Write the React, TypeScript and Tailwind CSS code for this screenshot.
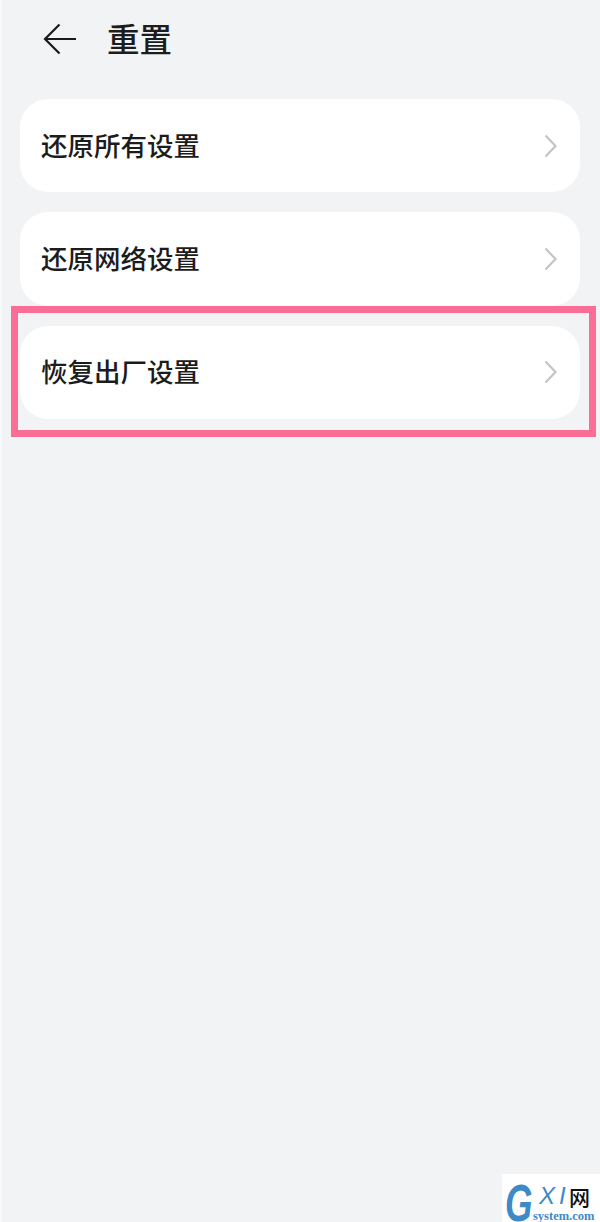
const rows = ["还原所有设置", "还原网络设置", "恢复出厂设置"];

const cjk = "font-['Noto_Sans_CJK_SC','Liberation_Sans',sans-serif]";

function Watermark() {
  return (
    <div className="absolute bottom-0 right-0 flex h-[48px] w-[98px] overflow-hidden bg-white pl-[3px] pt-[10px] font-['Liberation_Sans',sans-serif] text-[#3d8ac7]">
      <span className="w-[28px] shrink-0 origin-left scale-x-[0.68] text-[52px] font-bold italic leading-[38px]">G</span>
      <div className="flex flex-col">
        <div className="flex h-[24px] items-center">
          <span className="w-[36px] pl-[6px] text-[24px] italic leading-none tracking-[4px]">XI</span>
          <span className={`${cjk} text-[21px] font-medium leading-none text-[#111]`}>网</span>
        </div>
        <span className="mt-[2px] font-['Liberation_Serif',serif] text-[12.5px] font-bold leading-[13px]">system.com</span>
      </div>
    </div>
  );
}

export default function App() {
  return (
    <div className={`relative h-[1222px] w-[600px] overflow-hidden bg-[#f1f3f5] ${cjk}`}>
      <div className="absolute left-0 top-0 h-full w-[2px] bg-[#f8f9fa]" />

      <header className="flex h-[99px] items-start pl-[43px] pt-[22px]">
        <svg width="34" height="32" viewBox="0 0 34 32" fill="none" className="mt-[1px]">
          <path d="M33 16H2M16.5 1.5 2 16l14.5 14.5" stroke="#1a1a1a" strokeWidth="2.2" />
        </svg>
        <h1 className="ml-[30px] mt-[-3px] text-[32.5px] font-medium leading-[38px] text-[#1c1c1c]">重置</h1>
      </header>

      <div className="flex flex-col gap-5 px-5">
        {rows.map((label) => (
          <div key={label} className="flex h-[93.3px] items-center justify-between rounded-[28px] bg-white pl-[21px] pr-[23px]">
            <span className="mt-[-1px] text-[26.5px] font-medium leading-none text-[#1c1c1c]">{label}</span>
            <svg width="13" height="24" viewBox="0 0 13 24" fill="none">
              <path d="M1.5 1.5 11.5 12 1.5 22.5" stroke="#c4c4c4" strokeWidth="2.2" />
            </svg>
          </div>
        ))}
      </div>

      {/* pink highlight over the third row */}
      <div className="absolute left-[11px] top-[306px] h-[131px] w-[585px] border-[7px] border-[#fb6d94]" />

      <Watermark />
    </div>
  );
}
